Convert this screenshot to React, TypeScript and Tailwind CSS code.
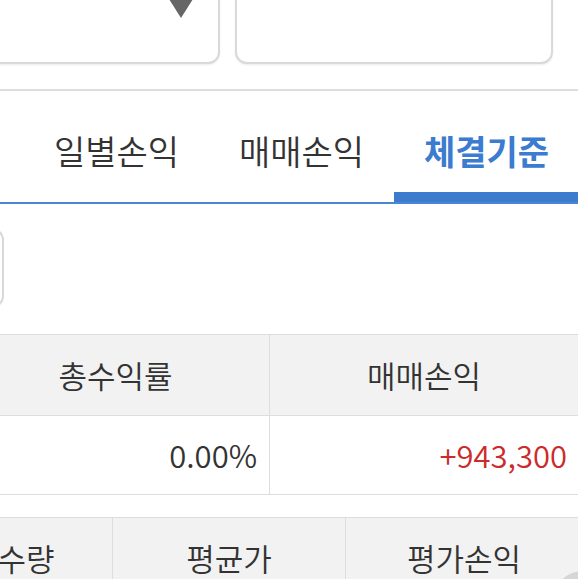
import React from "react";

// Trade history view: selectors, tab bar, summary table and position header
const tabs = [
    { label: "일별손익", active: false },
    { label: "매매손익", active: false },
    { label: "체결기준", active: true },
];

export default function App() {
    return (
        <div className="relative w-[578px] h-[579px] overflow-hidden bg-white font-['Noto_Sans_CJK_KR','Noto_Sans',sans-serif] font-[350] text-[#333333]">
            {/* selectors */}
            <div className="flex gap-[15px] mt-[-40px]">
                <div className="relative ml-[-20px] w-[240px] h-[104px] shrink-0 rounded-[12px] border-2 border-[#d9d9d9] bg-white shadow-[0_1px_2px_rgba(0,0,0,0.08)]">
                    <svg className="absolute left-[187px] top-[37px]" width="24" height="20" viewBox="0 0 24 20">
                        <path d="M0 0 L24 0 L12 19 Z" fill="#666666" />
                    </svg>
                </div>
                <div className="w-[318px] h-[104px] shrink-0 rounded-[12px] border-2 border-[#d9d9d9] bg-white shadow-[0_1px_2px_rgba(0,0,0,0.08)]" />
            </div>

            <div className="mt-[25px] h-[2px] bg-[#dddddd]" />

            {/* tabs */}
            <div className="flex h-[113px] pl-[24px] border-b-2 border-[#4a86d4]">
                {tabs.map((tab) => (
                    <div
                        key={tab.label}
                        className={
                            tab.active
                                ? "w-[185px] shrink-0 flex items-center justify-center pt-[18px] border-b-[10px] border-[#3d7ccc] text-[#3b7bd0] font-bold text-[34px]"
                                : "w-[185px] shrink-0 flex items-center justify-center pt-[18px] border-b-[10px] border-transparent text-[34px]"
                        }
                    >
                        {tab.label}
                    </div>
                ))}
            </div>

            {/* account picker edge */}
            <div className="mt-[24px] ml-[-26px] w-[30px] h-[80px] rounded-[12px] border-2 border-[#d8d8d8]" />

            {/* summary */}
            <div className="mt-[26px] ml-[-38px] w-[616px] grid grid-cols-2 border-y border-[#dddddd] text-[31px]">
                <div className="h-[80px] flex items-center justify-center bg-[#f2f2f2] border-r border-[#dddddd]">총수익률</div>
                <div className="h-[80px] flex items-center justify-center bg-[#f2f2f2]">매매손익</div>
                <div className="h-[79px] flex items-center justify-end pr-[12px] border-t border-r border-[#dddddd]">0.00%</div>
                <div className="h-[79px] flex items-center justify-end pr-[11px] border-t border-[#dddddd] text-[#cc2b2b]">+943,300</div>
            </div>

            {/* positions header */}
            <div className="mt-[22px] ml-[-60px] flex border-t border-[#dddddd] bg-[#f2f2f2] text-[31px]">
                <div className="w-[173px] h-[80px] shrink-0 flex items-center justify-center border-r border-[#dddddd]">수량</div>
                <div className="w-[233px] h-[80px] shrink-0 flex items-center justify-center border-r border-[#dddddd]">평균가</div>
                <div className="w-[236px] h-[80px] shrink-0 flex items-center justify-center">평가손익</div>
            </div>

            {/* floating button peeking in */}
            <div className="absolute left-[553px] top-[571px] w-[60px] h-[60px] rounded-full bg-[#d6d6d6]" />
        </div>
    );
}
